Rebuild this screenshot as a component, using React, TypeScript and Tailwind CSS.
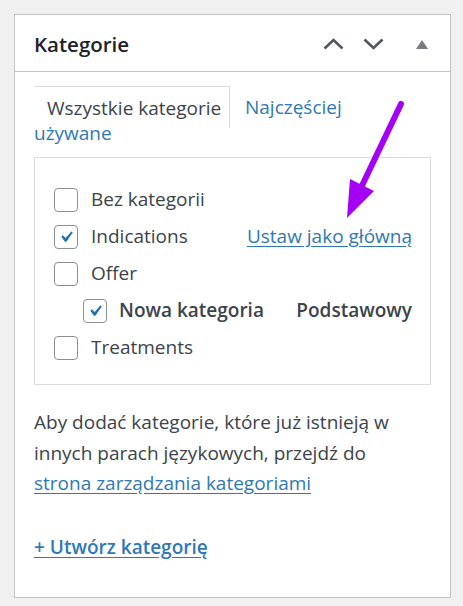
const font = { fontFamily: '"Open Sans", "Noto Sans", sans-serif' }

function Box({ checked }: { checked?: boolean }) {
  return (
    <span className="flex h-[24px] w-[24px] shrink-0 items-center justify-center rounded-[4px] border border-[#8c8f94] bg-white">
      {checked ? (
        <svg viewBox="0 0 20 20" className="h-[24px] w-[24px]">
          <path d="M14.83 4.89l1.34.94-5.81 8.38H9.02L5.78 9.67l1.34-1.25 2.57 2.4z" fill="#2271b1" />
        </svg>
      ) : null}
    </span>
  )
}

export default function App() {
  return (
    <div className="relative h-[606px] w-[463px] bg-[#f0f0f1] pl-[14px] pt-[14px] text-[#3c434a]" style={font}>
      <div className="h-[584px] w-[437px] border border-[#c3c4c7] bg-white">
        <div className="flex h-[57px] items-center border-b border-[#c3c4c7] pl-[19px] pt-[2px]">
          <h2 className="text-[20.5px] font-semibold text-[#1d2327]">Kategorie</h2>
          <div className="ml-auto flex items-center pr-[22px]">
            <svg viewBox="0 0 21 12" className="h-[12px] w-[21px]">
              <polyline points="1.5,10.5 10.5,2 19.5,10.5" fill="none" stroke="#50575e" strokeWidth="2.6" />
            </svg>
            <svg viewBox="0 0 21 12" className="ml-[19px] h-[12px] w-[21px]">
              <polyline points="1.5,1.5 10.5,10 19.5,1.5" fill="none" stroke="#50575e" strokeWidth="2.6" />
            </svg>
            <svg viewBox="0 0 12 9" className="ml-[32px] h-[9px] w-[12px]">
              <path d="M6 0L12 9H0z" fill="#787c82" />
            </svg>
          </div>
        </div>

        <div className="px-[19px] pt-[14px]">
          <div className="flex h-[42px] items-start">
            <div className="h-[42px] w-[196px] whitespace-nowrap border-r border-t border-[#dcdcde] pl-[13px] pt-[9px] text-[19px] leading-[24px]">
              Wszystkie kategorie
            </div>
            <a className="ml-[15px] pt-[9px] text-[19px] leading-[24px] text-[#2f78b6]">Najczęściej</a>
          </div>
          <a className="-mt-[7px] block text-[19px] leading-[24px] text-[#2f78b6]">używane</a>

          <div className="mt-[12px] h-[228px] border border-[#dcdcde] pl-[19px] pr-[18px] pt-[23px] text-[19px]">
            <div className="flex h-[37px] items-center">
              <Box />
              <span className="ml-[13px]">Bez kategorii</span>
            </div>
            <div className="flex h-[37px] items-center">
              <Box checked />
              <span className="ml-[13px]">Indications</span>
              <a className="ml-auto text-[#2f78b6] underline underline-offset-[3px]">Ustaw jako główną</a>
            </div>
            <div className="flex h-[37px] items-center">
              <Box />
              <span className="ml-[13px]">Offer</span>
            </div>
            <div className="flex h-[37px] items-center pl-[29px]">
              <Box checked />
              <span className="ml-[12px] font-semibold">Nowa kategoria</span>
              <span className="ml-auto font-semibold">Podstawowy</span>
            </div>
            <div className="flex h-[37px] items-center">
              <Box />
              <span className="ml-[13px]">Treatments</span>
            </div>
          </div>

          <p className="mt-[22px] text-[19px] leading-[30.5px]">
            Aby dodać kategorie, które już istnieją w<br />
            innych parach językowych, przejdź do<br />
            <a className="text-[#2f78b6] underline underline-offset-[3px]">strona zarządzania kategoriami</a>
          </p>
          <a className="mt-[33px] block text-[19px] font-semibold leading-[30.5px] text-[#2f78b6] underline underline-offset-[3px]">
            + Utwórz kategorię
          </a>
        </div>
      </div>

      <svg className="pointer-events-none absolute left-0 top-0" width="463" height="606">
        <line x1="401" y1="104" x2="358" y2="194" stroke="#a400f6" strokeWidth="6" strokeLinecap="round" />
        <polygon points="347,218 374,191 350,179" fill="#a400f6" />
      </svg>
    </div>
  )
}
